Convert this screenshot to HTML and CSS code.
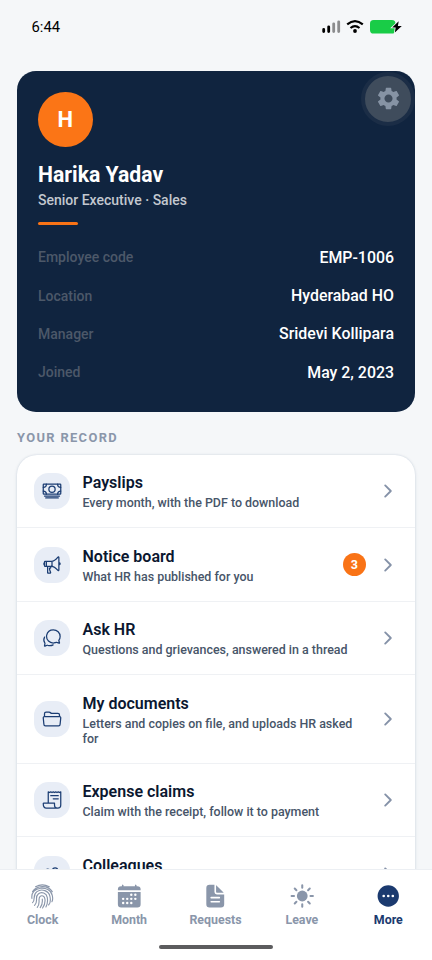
FILE: index.html
```html
<!DOCTYPE html>
<html lang="en">
<head>
<meta charset="utf-8">
<meta name="viewport" content="width=device-width, initial-scale=1">
<title>More</title>
<link rel="stylesheet" href="styles.css">
</head>
<body>
<div class="app">
  <header class="status">
    <span class="time">6:44</span>
    <svg class="status-icons" viewBox="0 0 82 16" width="82" height="16">
      <g stroke-width="2.8" stroke-linecap="round">
        <path d="M1.7 10.4v2.2M6.7 7.8v4.8" stroke="#000"/>
        <path d="M11.7 4.8v7.8M16.7 2.8v9.8" stroke="#8b8c8e"/>
      </g>
      <g fill="none" stroke="#000" stroke-width="2.2">
        <path d="M25.2 5.4q7.8-6.6 15.600 0"/>
        <path d="M28.500 9q4.500-3.800 9 0"/>
      </g>
      <circle cx="33" cy="12" r="1.9"/>
      <rect x="48" y="1" width="25.500" height="13.500" rx="3.600" fill="#19cc47"/>
      <path d="M76.700 2.300l-6.500 6.200h3.500l-.9 5 7-6.600h-3.900z" stroke="#f5f7fa" stroke-width="1.600" paint-order="stroke"/>
    </svg>
  </header>

  <main class="content">
    <section class="hero">
      <button class="settings" aria-label="Settings">
        <svg viewBox="0 0 24 24" width="27" height="27" fill="#8693a4"><path d="M19.140 12.940c.04-.3.06-.61.06-.94 0-.32-.02-.64-.07-.94l2.030-1.580c.18-.14.23-.41.12-.61l-1.920-3.320c-.12-.22-.37-.29-.59-.22l-2.390.96c-.5-.38-1.030-.7-1.620-.94l-.36-2.540c-.04-.24-.24-.41-.48-.41h-3.840c-.24 0-.43.17-.47.41l-.36 2.540c-.59.24-1.130.57-1.620.94l-2.390-.96c-.22-.08-.47 0-.59.22L2.740 8.870c-.12.21-.08.47.12.61l2.030 1.580c-.05.3-.09.63-.09.94s.02.64.07.94l-2.030 1.580c-.18.14-.23.41-.12.61l1.920 3.320c.12.22.37.29.59.22l2.390-.96c.5.38 1.030.7 1.620.94l.36 2.540c.05.24.24.41.48.41h3.840c.24 0 .44-.17.47-.41l.36-2.540c.59-.24 1.130-.56 1.620-.94l2.390.96c.22.08.47 0 .59-.22l1.920-3.320c.12-.22.07-.47-.12-.61l-2.010-1.580zM12 15.600c-1.980 0-3.600-1.620-3.600-3.600s1.620-3.600 3.600-3.600 3.600 1.620 3.600 3.600-1.620 3.600-3.600 3.600z"/></svg>
      </button>
      <div class="avatar">H</div>
      <h1 class="name">Harika Yadav</h1>
      <p class="role">Senior Executive · Sales</p>
      <div class="accent"></div>
      <dl class="facts">
        <div class="fact"><dt>Employee code</dt><dd>EMP-1006</dd></div>
        <div class="fact"><dt>Location</dt><dd>Hyderabad HO</dd></div>
        <div class="fact"><dt>Manager</dt><dd>Sridevi Kollipara</dd></div>
        <div class="fact"><dt>Joined</dt><dd>May 2, 2023</dd></div>
      </dl>
    </section>

    <h2 class="section-title">YOUR RECORD</h2>
    <section class="list">
      <a class="row">
        <span class="tile"><svg class="line" viewBox="0 0 512 512"><rect x="32" y="80" width="448" height="256" rx="16"/><path d="M64 384h384M96 432h320"/><circle cx="256" cy="208" r="80"/><path d="M480 160a80 80 0 01-80-80M32 160a80 80 0 0080-80M480 256a80 80 0 00-80 80M32 256a80 80 0 0180 80"/></svg></span>
        <span class="copy"><span class="title">Payslips</span><span class="sub">Every month, with the PDF to download</span></span>
        <svg class="chevron" viewBox="0 0 512 512"><path d="M184 112l144 144-144 144"/></svg>
      </a>
      <a class="row">
        <span class="tile"><svg class="line" viewBox="0 0 512 512"><path d="M407.940 52.220S321.300 160 240 160H80a16 16 0 00-16 16v96a16 16 0 0016 16h160c81.300 0 167.940 108.230 167.940 108.230 6.060 8 24.060 2.520 24.060-9.830V62c0-12.310-17-18.820-24.060-9.780zM64 256s-16-6-16-32 16-32 16-32M448 246s16-4.330 16-22-16-22-16-22M256 160v128M112 160v128M144 288v168a8 8 0 008 8h53a16 16 0 0015.290-20.730C211.910 416.390 192 386.080 192 336h16a16 16 0 0016-16v-16a16 16 0 00-16-16h-16"/></svg></span>
        <span class="copy"><span class="title">Notice board</span><span class="sub">What HR has published for you</span></span>
        <span class="count">3</span>
        <svg class="chevron" viewBox="0 0 512 512"><path d="M184 112l144 144-144 144"/></svg>
      </a>
      <a class="row">
        <span class="tile"><svg class="line" viewBox="0 0 512 512"><path d="M431 320.600c-1-3.600 1.200-8.600 3.300-12.200a33.680 33.680 0 012.100-3.100A162 162 0 00464 215c.3-92.200-77.500-167-173.700-167-83.900 0-153.900 57.100-170.300 132.900a160.700 160.700 0 00-3.700 34.200c0 92.300 74.800 169.100 171 169.100 15.300 0 35.900-4.600 47.200-7.700s22.500-7.200 25.400-8.300a26.440 26.440 0 019.300-1.700 26 26 0 0110.100 2l56.700 20.100a13.520 13.520 0 003.900 1 8 8 0 008-8 12.850 12.850 0 00-.5-2.700zM66.460 232a146.230 146.230 0 006.390 152.670c2.310 3.490 3.610 6.190 3.210 8s-11.930 61.870-11.930 61.870a8 8 0 002.710 7.680A8.170 8.170 0 0072 464a7.260 7.260 0 002.910-.6l56.210-22a15.700 15.700 0 0112 .2c18.940 7.380 39.880 12 60.830 12A159.210 159.210 0 00284 432.110"/></svg></span>
        <span class="copy"><span class="title">Ask HR</span><span class="sub">Questions and grievances, answered in a thread</span></span>
        <svg class="chevron" viewBox="0 0 512 512"><path d="M184 112l144 144-144 144"/></svg>
      </a>
      <a class="row">
        <span class="tile"><svg class="line" viewBox="0 0 512 512"><path d="M64 192v-72a40 40 0 0140-40h75.890a40 40 0 0122.190 6.720l27.840 18.560a40 40 0 0022.190 6.720H408a40 40 0 0140 40v40M479.900 226.550L463.680 392a40 40 0 01-39.930 40H88.250a40 40 0 01-39.930-40L32.100 226.550A32 32 0 0164 192h384.100a32 32 0 0131.800 34.550z"/></svg></span>
        <span class="copy"><span class="title">My documents</span><span class="sub">Letters and copies on file, and uploads HR asked for</span></span>
        <svg class="chevron" viewBox="0 0 512 512"><path d="M184 112l144 144-144 144"/></svg>
      </a>
      <a class="row">
        <span class="tile"><svg class="line" viewBox="0 0 512 512"><path d="M160 336V48l32 16 32-16 31.940 16 32.370-16L320 64l31.790-16 31.930 16L416 48l32.010 16L480 48v336a80 80 0 01-80 80 80 80 0 01-80-80v-48H48a15.860 15.860 0 00-16 16c0 64 6.740 112 80 112h288M224 144h192M288 224h128"/></svg></span>
        <span class="copy"><span class="title">Expense claims</span><span class="sub">Claim with the receipt, follow it to payment</span></span>
        <svg class="chevron" viewBox="0 0 512 512"><path d="M184 112l144 144-144 144"/></svg>
      </a>
      <a class="row last">
        <span class="tile"><svg class="line" viewBox="0 0 512 512"><path d="M402 168c-2.930 40.670-33.100 72-66 72s-63.120-31.320-66-72c-3-42.310 26.370-72 66-72s69 30.460 66 72zM336 304c-65.170 0-127.840 32.370-143.540 95.410-2.080 8.340 3.150 16.590 11.720 16.590h263.650c8.570 0 13.770-8.250 11.720-16.590C463.850 335.360 401.180 304 336 304zM200 185.940c-2.340 32.480-26.720 58.060-53 58.060s-50.700-25.570-53-58.060C91.610 152.150 115.340 128 147 128s55.390 24.770 53 57.940zM206 306c-18.050-8.270-37.930-11.450-59-11.450-52 0-102.100 25.850-114.650 76.200-1.650 6.660 2.530 13.250 9.370 13.250H154"/></svg></span>
        <span class="copy"><span class="title">Colleagues</span></span>
        <svg class="chevron" viewBox="0 0 512 512"><path d="M184 112l144 144-144 144"/></svg>
      </a>
    </section>
  </main>

  <nav class="tabs">
    <a class="tab">
      <svg viewBox="0 0 78 78" fill="none" stroke="currentColor" stroke-width="3.400" stroke-linecap="round"><path d="M19 11Q39 0 60 11M10 26C22 7 56 5 69 26M8 46C3 9 62 5 69 37Q72 49 68 56M10 59C20 51 8 37 23 26C38 15 59 24 62 40Q66 58 58 66M16 67C29 54 15 43 27 33C37 24 52 31 54 43Q57 59 50 72M24 73C35 61 25 49 32 41C38 35 46 40 47 48Q49 62 40 75M33 74C41 64 40 56 39 48"/></svg>
      <span>Clock</span>
    </a>
    <a class="tab">
      <svg viewBox="0 0 512 512" fill="currentColor"><path d="M480 128a64 64 0 00-64-64h-16V48.450c0-8.610-6.620-16-15.230-16.430A16 16 0 00368 48v16H144V48.450c0-8.610-6.620-16-15.230-16.430A16 16 0 00112 48v16H96a64 64 0 00-64 64v12a4 4 0 004 4h440a4 4 0 004-4zM32 416a64 64 0 0064 64h320a64 64 0 0064-64V179a3 3 0 00-3-3H35a3 3 0 00-3 3z"/><g fill="#fff"><circle cx="296" cy="232" r="24"/><circle cx="376" cy="232" r="24"/><circle cx="136" cy="312" r="24"/><circle cx="216" cy="312" r="24"/><circle cx="296" cy="312" r="24"/><circle cx="376" cy="312" r="24"/><circle cx="136" cy="392" r="24"/><circle cx="216" cy="392" r="24"/><circle cx="296" cy="392" r="24"/></g></svg>
      <span>Month</span>
    </a>
    <a class="tab">
      <svg viewBox="0 0 512 512" fill="currentColor"><path d="M428 224H288a48 48 0 01-48-48V36a4 4 0 00-4-4h-92a64 64 0 00-64 64v320a64 64 0 0064 64h224a64 64 0 0064-64V228a4 4 0 00-4-4zm-92 160H176a16 16 0 010-32h160a16 16 0 010 32zm0-80H176a16 16 0 010-32h160a16 16 0 010 32z"/><path d="M419.220 188.590L275.410 44.780a2 2 0 00-3.410 1.410V176a16 16 0 0016 16h129.810a2 2 0 001.410-3.410z"/></svg>
      <span>Requests</span>
    </a>
    <a class="tab">
      <svg viewBox="0 0 512 512" fill="currentColor"><circle cx="256" cy="256" r="106"/><path d="M256 46v48M256 418v48M466 256h-48M94 256H46M404 108l-33 33M141 371l-33 33M404 404l-33-33M141 141l-33-33" stroke="currentColor" stroke-width="40" stroke-linecap="round"/></svg>
      <span>Leave</span>
    </a>
    <a class="tab active">
      <svg viewBox="0 0 512 512" fill="currentColor"><circle cx="256" cy="256" r="210"/><g fill="#fff"><circle cx="166" cy="256" r="26"/><circle cx="256" cy="256" r="26"/><circle cx="346" cy="256" r="26"/></g></svg>
      <span>More</span>
    </a>
    <div class="home"></div>
  </nav>
</div>
</body>
</html>
```

FILE: styles.css
```css
* { box-sizing: border-box; }

body {
  margin: 0;
  background: #f5f7f9;
  font-family: Roboto, sans-serif;
  color: #0b1730;
}

h1, h2, p, dl, dd { margin: 0; }

.app {
  display: flex;
  flex-direction: column;
  height: 960px;
  overflow: hidden;
}

.status {
  flex: none;
  display: flex;
  justify-content: space-between;
  align-items: center;
  height: 71px;
  padding: 0 28px 17px 31.5px;
}

.time {
  font-size: 14.8px;
  font-weight: 400;
  color: #000;
}

.status-icons { display: block; }

.content {
  flex: 1;
  min-height: 0;
  overflow: hidden;
  padding: 0 17px;
}

.hero {
  position: relative;
  height: 340.5px;
  padding: 21px;
  border-radius: 19px;
  background: #10243f;
}

.settings {
  position: absolute;
  top: .5px;
  right: 0;
  display: grid;
  place-items: center;
  width: 54px;
  height: 54px;
  padding: 0;
  border: 4px solid #1b2d46;
  border-radius: 50%;
  background: #3f4c5c;
}

.avatar {
  display: grid;
  place-items: center;
  width: 54.5px;
  height: 55px;
  border-radius: 50%;
  background: #fb7516;
  color: #fff;
  font-size: 22px;
  font-weight: 700;
}

.name {
  margin-top: 14px;
  color: #fff;
  font-size: 21.2px;
  font-weight: 700;
  line-height: 28px;
}

.role {
  margin-top: 1px;
  color: #c3c8cf;
  font-size: 14px;
  font-weight: 500;
  line-height: 20px;
}

.accent {
  width: 39.5px;
  height: 3px;
  margin-top: 11.5px;
  border-radius: 2px;
  background: #f97316;
}

.facts { margin-top: 13.5px; }

.fact {
  display: flex;
  justify-content: space-between;
  align-items: center;
  height: 38.4px;
}

.fact dt {
  color: #4c5869;
  font-size: 14px;
  font-weight: 500;
}

.fact dd {
  color: #fff;
  font-size: 15.9px;
  font-weight: 500;
}

.section-title {
  padding-top: 17px;
  color: #8a96aa;
  font-size: 12.9px;
  font-weight: 700;
  line-height: 18px;
  letter-spacing: 1.35px;
}

.list {
  margin-top: 8px;
  border-radius: 20px;
  background: #fff;
  box-shadow: 0 0 2px #c9d2de, 0 1px 4px rgba(30, 50, 80, .08);
}

.row {
  display: flex;
  align-items: center;
  min-height: 73.5px;
  padding: 17px 17px 16.5px;
  border-bottom: 1px solid #eff1f4;
}

.row.last { border-bottom: 0; }

.row.last .copy { padding-bottom: 18px; }

.tile {
  flex: none;
  display: grid;
  place-items: center;
  width: 36px;
  height: 36px;
  margin-right: 12.5px;
  border-radius: 14.5px;
  background: #e8edf6;
}

.line {
  width: 20px;
  height: 20px;
  fill: none;
  stroke: #1b3d73;
  stroke-width: 32;
  stroke-linecap: round;
  stroke-linejoin: round;
}

.copy {
  flex: 1;
  padding: 1.5px 0 .5px;
}

.title, .sub { display: block; }

.title {
  font-size: 16px;
  font-weight: 600;
  line-height: 20px;
}

.sub {
  margin-top: 2px;
  color: #475569;
  font-size: 12.45px;
  font-weight: 500;
  line-height: 15px;
}

.chevron {
  flex: none;
  width: 20px;
  height: 20px;
  margin-left: 12px;
  fill: none;
  stroke: #8592a8;
  stroke-width: 48;
  stroke-linecap: round;
  stroke-linejoin: round;
}

.count {
  display: grid;
  place-items: center;
  width: 23.5px;
  height: 23.5px;
  border-radius: 50%;
  background: #f97316;
  color: #fff;
  font-size: 12.5px;
  font-weight: 700;
}

.tabs {
  flex: none;
  display: grid;
  grid-template-columns: repeat(5, 1fr);
  align-content: start;
  height: 91px;
  padding-top: 13px;
  border-top: 1px solid #eceff3;
  background: #fff;
}

.tab {
  display: flex;
  flex-direction: column;
  align-items: center;
  gap: 3px;
  padding-right: 1px;
  color: #8a96aa;
  font-size: 12.4px;
  font-weight: 700;
  line-height: 16px;
}

.tab svg {
  width: 26.5px;
  height: 26px;
}

.tab.active { color: #1b3a6f; }

.home {
  grid-column: 1 / -1;
  justify-self: center;
  width: 114px;
  height: 4px;
  margin-top: 17px;
  border-radius: 2px;
  background: #5c5c5e;
}
```
